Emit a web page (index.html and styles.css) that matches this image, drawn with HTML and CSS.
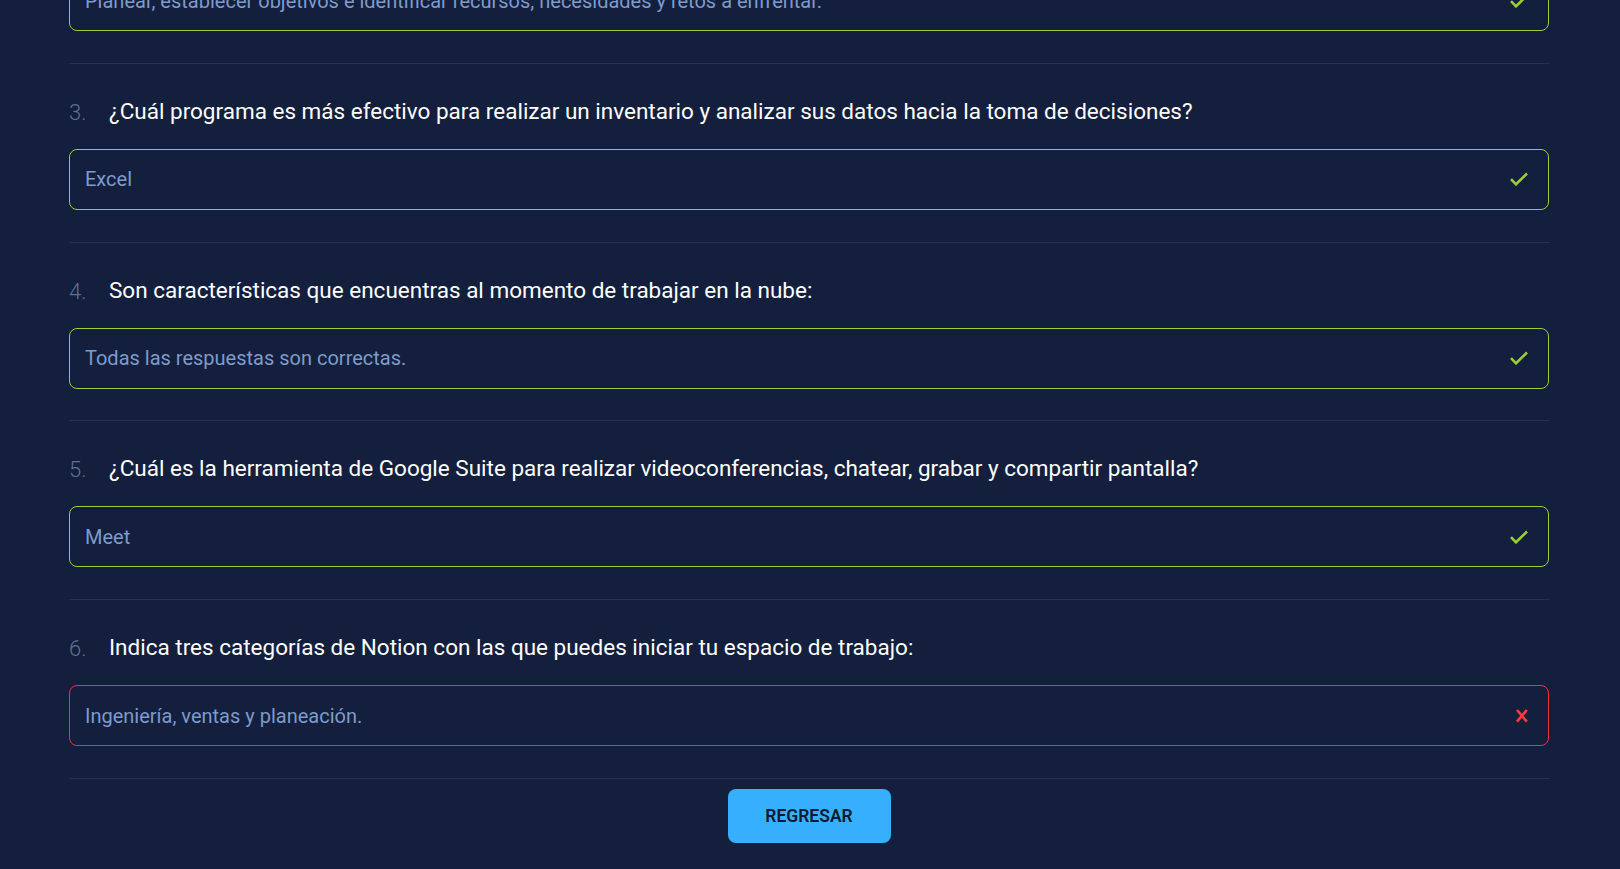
FILE: index.html
```html
<!DOCTYPE html>
<html lang="es">
<head>
<meta charset="utf-8">
<title>Resultados</title>
<link rel="stylesheet" href="styles.css">
</head>
<body>
<main class="quiz">
  <section class="item item-partial">
    <div class="answer correct">
      <span class="answer-text">Planear, establecer objetivos e identificar recursos, necesidades y retos a enfrentar.</span>
      <svg class="icon" width="18" height="14" viewBox="0 0 18 14"><polyline points="1,7.2 6,12.3 17,1.5" fill="none" stroke="#9bcf35" stroke-width="2.6"/></svg>
    </div>
  </section>

  <section class="item">
    <h2 class="question"><span class="num">3.</span>¿Cuál programa es más efectivo para realizar un inventario y analizar sus datos hacia la toma de decisiones?</h2>
    <div class="answer correct">
      <span class="answer-text">Excel</span>
      <svg class="icon" width="18" height="14" viewBox="0 0 18 14"><polyline points="1,7.2 6,12.3 17,1.5" fill="none" stroke="#9bcf35" stroke-width="2.6"/></svg>
    </div>
  </section>

  <section class="item">
    <h2 class="question"><span class="num">4.</span>Son características que encuentras al momento de trabajar en la nube:</h2>
    <div class="answer correct">
      <span class="answer-text">Todas las respuestas son correctas.</span>
      <svg class="icon" width="18" height="14" viewBox="0 0 18 14"><polyline points="1,7.2 6,12.3 17,1.5" fill="none" stroke="#9bcf35" stroke-width="2.6"/></svg>
    </div>
  </section>

  <section class="item">
    <h2 class="question"><span class="num">5.</span>¿Cuál es la herramienta de Google Suite para realizar videoconferencias, chatear, grabar y compartir pantalla?</h2>
    <div class="answer correct">
      <span class="answer-text">Meet</span>
      <svg class="icon" width="18" height="14" viewBox="0 0 18 14"><polyline points="1,7.2 6,12.3 17,1.5" fill="none" stroke="#9bcf35" stroke-width="2.6"/></svg>
    </div>
  </section>

  <section class="item">
    <h2 class="question"><span class="num">6.</span>Indica tres categorías de Notion con las que puedes iniciar tu espacio de trabajo:</h2>
    <div class="answer wrong">
      <span class="answer-text">Ingeniería, ventas y planeación.</span>
      <svg class="icon" width="18" height="14" viewBox="0 0 18 14"><path d="M7 1 L16.8 12.6 M16.8 1 L7 12.6" fill="none" stroke="#ff3a3a" stroke-width="2.7"/></svg>
    </div>
  </section>

  <div class="actions">
    <button class="btn" type="button">REGRESAR</button>
  </div>
</main>
</body>
</html>
```

FILE: styles.css
```css
html, body {
  margin: 0;
  padding: 0;
  background: #131f3d;
  overflow: hidden;
}

body {
  font-family: Roboto, "Liberation Sans", Arial, sans-serif;
  height: 869px;
}

.quiz {
  width: 1480px;
  margin-left: 69px;
  display: flex;
  flex-direction: column;
}

.item {
  padding: 34px 0 31.8px;
  border-bottom: 1px solid #223257;
}

.item-partial {
  padding-top: 0;
  margin-top: -30px;
}

.question {
  margin: 0 0 25px;
  height: 26px;
  font-size: 22.5px;
  line-height: 26px;
  font-weight: 400;
  color: #ffffff;
  display: flex;
  align-items: baseline;
}

.num {
  width: 40px;
  flex: none;
  font-size: 22px;
  font-weight: 300;
  color: #5f7091;
  position: relative;
  top: 1px;
}

.answer {
  box-sizing: border-box;
  height: 61px;
  border: 1px solid #9bcf35;
  border-radius: 8px;
  padding: 0 20px 0 15px;
  display: flex;
  align-items: center;
  justify-content: space-between;
}

.answer.wrong {
  border-color: #e2383f;
}

.answer-text {
  font-size: 20px;
  color: #7e9bcb;
}

.icon {
  flex: none;
  display: block;
}

.actions {
  display: flex;
  justify-content: center;
  padding-top: 10px;
}

.btn {
  width: 163px;
  height: 54px;
  border: none;
  border-radius: 8px;
  background: #36b0fe;
  color: #0f1b33;
  font-family: Roboto, "Liberation Sans", Arial, sans-serif;
  font-size: 17.5px;
  font-weight: 600;
  cursor: pointer;
}
```
